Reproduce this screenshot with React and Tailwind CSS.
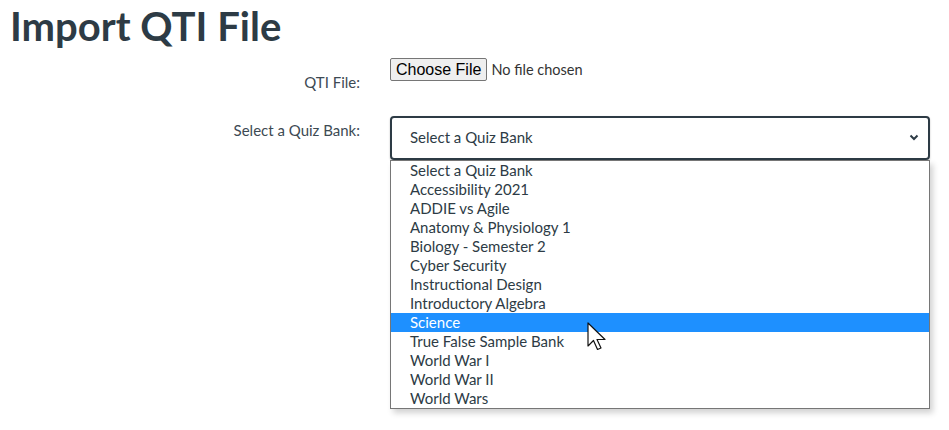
import React from 'react'

const banks = [
  'Select a Quiz Bank',
  'Accessibility 2021',
  'ADDIE vs Agile',
  'Anatomy & Physiology 1',
  'Biology - Semester 2',
  'Cyber Security',
  'Instructional Design',
  'Introductory Algebra',
  'Science',
  'True False Sample Bank',
  'World War I',
  'World War II',
  'World Wars',
]

function Cursor() {
  return (
    <svg className="absolute left-[587px] top-[322px]" width="22" height="33" viewBox="0 0 22 33">
      <path
        d="M1 1 L1 24 L6.5 18.5 L10.5 27.5 L14 26 L10 17.5 L18 17.5 Z"
        fill="#fff"
        stroke="#111"
        strokeWidth="1.2"
        strokeLinejoin="round"
      />
    </svg>
  )
}

export default function App() {
  return (
    <div className="relative w-[949px] h-[430px] bg-white overflow-hidden font-['Lato','Noto_Sans',sans-serif] text-[#2d3b45]">
      <h1 className="pl-[10px] pt-[3px] text-[40px] leading-[46px] font-bold">Import QTI File</h1>

      <div className="mt-[9px] flex gap-[30px]">
        <div className="w-[360px] pt-[13px] text-right text-[15px] text-[#3d4a53]">QTI File:</div>
        <div className="flex items-center gap-[4px] self-start">
          <button className="h-[23px] px-[5px] rounded-[2px] border border-[#767676] bg-[#efefef] text-[16px] leading-[20px] text-black font-['Liberation_Sans',Arial,sans-serif]">
            Choose File
          </button>
          <span className="text-[14.5px] text-[#333]">No file chosen</span>
        </div>
      </div>

      <div className="mt-[22px] flex gap-[30px]">
        <div className="w-[360px] pt-[3px] text-right text-[15px] text-[#3d4a53]">Select a Quiz Bank:</div>
        <div className="relative">
          <div className="w-[540px] h-[44px] rounded-[4px] border-2 border-[#2d3b45] flex items-center justify-between pl-[18px] pr-[9px] text-[15px] shadow-[0_1px_2px_rgba(0,0,0,0.25)]">
            <span>Select a Quiz Bank</span>
            <svg width="10" height="7" viewBox="0 0 10 7">
              <path d="M1.5 1.5 L5 5 L8.5 1.5" fill="none" stroke="#2d3b45" strokeWidth="2" />
            </svg>
          </div>
          <ul className="absolute left-0 top-[44px] w-[540px] bg-white border border-[#767676] shadow-[3px_4px_6px_rgba(0,0,0,0.18)]">
            {banks.map((b) => (
              <li
                key={b}
                className={
                  b === 'Science'
                    ? 'h-[19px] leading-[19px] pl-[19px] text-[15px] bg-[#1e90ff] text-white'
                    : 'h-[19px] leading-[19px] pl-[19px] text-[15px]'
                }
              >
                {b}
              </li>
            ))}
          </ul>
        </div>
      </div>

      <Cursor />
    </div>
  )
}
